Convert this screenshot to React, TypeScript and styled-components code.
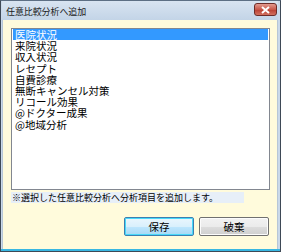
import React from "react";
import styled, { createGlobalStyle } from "styled-components";

const Global = createGlobalStyle`
    html, body {
        margin: 0;
        padding: 0;
        background: #ffffff;
    }
    body {
        font-family: "Noto Sans CJK JP", "Noto Sans", sans-serif;
    }
`;

const WINDOW = styled.div`
    width: 281px;
    height: 252px;
    box-sizing: border-box;
    display: flex;
    flex-direction: column;
    border-left: 1px solid #3e4956;
    border-right: 1px solid #3e4956;
    border-top: 1px solid #5d6f84;
    background: #cad9ea;
    padding: 0 2px 0 1px;
`;

const TITLEBAR = styled.div`
    height: 19px;
    flex-shrink: 0;
    display: flex;
    align-items: center;
    justify-content: space-between;
    padding: 0 1px 0 4px;
    background: linear-gradient(#d8e4f1, #c3d4e7);
`;

const TITLE = styled.div`
    font-size: 9px;
    color: #1b1b1b;
    letter-spacing: -0.1px;
    margin-top: 1px;
`;

const CLOSE = styled.div`
    width: 23px;
    height: 13px;
    margin-top: -2px;
    box-sizing: border-box;
    border: 1px solid #6d2c28;
    border-radius: 3px;
    background: linear-gradient(#e39a8f, #c8584b 50%, #b93e31 51%, #d2705f);
    display: flex;
    align-items: center;
    justify-content: center;
`;

const CLIENT = styled.div`
    flex: 1;
    background: #fffbdc;
    border-left: 1px solid #b7c6d6;
    border-right: 1px solid #b7c6d6;
    padding: 8px 7px 0 8px;
    display: flex;
    flex-direction: column;
`;

const LIST = styled.div`
    height: 162px;
    box-sizing: border-box;
    border: 1px solid #828790;
    background: #ffffff;
    padding: 0 1px;
`;

const ITEM = styled.div<{ $selected?: boolean }>`
    height: 11.2px;
    line-height: 11.2px;
    font-size: 10.5px;
    padding-left: 2px;
    color: ${(p) => (p.$selected ? "#ffffff" : "#000000")};
    background: ${(p) => (p.$selected ? "#3399ff" : "transparent")};
    white-space: nowrap;
`;

const NOTE = styled.div`
    margin-top: 2px;
    width: 232px;
    height: 11px;
    line-height: 11px;
    font-size: 9px;
    color: #000000;
    background: #e7eff8;
    padding-left: 1px;
    white-space: nowrap;
`;

const BUTTONS = styled.div`
    display: flex;
    justify-content: flex-end;
    gap: 5px;
    margin-top: 14px;
    padding-right: 1px;
`;

const BUTTON = styled.div<{ $default?: boolean }>`
    width: 70px;
    height: 19px;
    box-sizing: border-box;
    border-radius: 2px;
    border: 1px solid ${(p) => (p.$default ? "#3c7fb1" : "#707070")};
    box-shadow: inset 0 0 0 1px ${(p) => (p.$default ? "#48d9f9" : "#fcfcfc")};
    background: ${(p) =>
        p.$default
            ? "linear-gradient(#eaf6fd 0%, #d9f0fc 50%, #bee6fd 51%, #a7d9f5 100%)"
            : "linear-gradient(#f2f2f2 0%, #ebebeb 50%, #dddddd 51%, #cfcfcf 100%)"};
    display: flex;
    align-items: center;
    justify-content: center;
    font-size: 10.5px;
    color: #000000;
`;

const BOTTOM = styled.div`
    height: 2px;
    flex-shrink: 0;
    margin: 0 -2px 0 -1px;
    background: #38b7e2;
    border-bottom: 1px solid #3e4956;
`;

const items = [
    "医院状況",
    "来院状況",
    "収入状況",
    "レセプト",
    "自費診療",
    "無断キャンセル対策",
    "リコール効果",
    "@ドクター成果",
    "@地域分析",
];

const App = () => {
    return (
        <>
            <Global />
            <WINDOW>
                <TITLEBAR>
                    <TITLE>任意比較分析へ追加</TITLE>
                    <CLOSE>
                        <svg width="9" height="8" viewBox="0 0 9 8">
                            <path d="M1 1 L8 7 M8 1 L1 7" stroke="#ffffff" strokeWidth="2" />
                        </svg>
                    </CLOSE>
                </TITLEBAR>
                <CLIENT>
                    <LIST>
                        {items.map((x, i) => (
                            <ITEM key={x} $selected={i === 0}>
                                {x}
                            </ITEM>
                        ))}
                    </LIST>
                    <NOTE>※選択した任意比較分析へ分析項目を追加します。</NOTE>
                    <BUTTONS>
                        <BUTTON $default>保存</BUTTON>
                        <BUTTON>破棄</BUTTON>
                    </BUTTONS>
                </CLIENT>
                <BOTTOM />
            </WINDOW>
        </>
    );
};

export default App;
